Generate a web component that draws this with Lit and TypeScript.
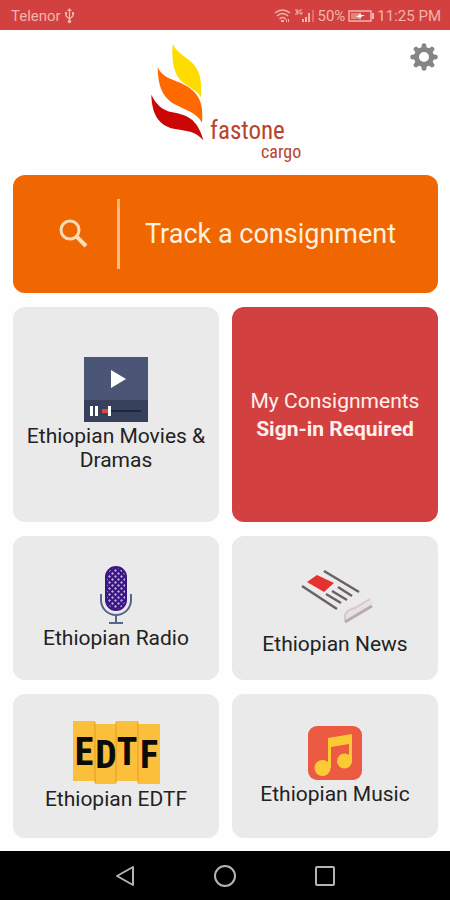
import { LitElement, html, css, svg } from "lit";
import { customElement, property } from "lit/decorators.js";

const gear = html`<svg width="28" height="28" viewBox="0 0 28 28" aria-hidden="true">
  <g fill="#858585">
    <path fill-rule="evenodd" d="M14 4a10 10 0 1 0 0 20a10 10 0 1 0 0-20zM14 9a5 5 0 1 1 0 10a5 5 0 1 1 0-10z"/>
    ${[0, 45, 90, 135, 180, 225, 270, 315].map(
      (a) => svg`<path transform="rotate(${a} 14 14)" d="M11 6L12 1Q14 -0.500 16 1L17 6z"/>`
    )}
  </g>
</svg>`;

const logo = html`<svg width="160" height="135" viewBox="0 0 160 135" role="img" aria-label="fastone cargo">
  <g transform="scale(.33333) translate(-15 0)">
    <path fill="#ffdc00" d="M98 27C112 57 140 65 160 87C183 112 185 145 183 187C168 160 142 158 120 134C98 109 95 68 98 27z"/>
    <path fill="#ff6a00" d="M53 97C72 135 105 132 141 154C181 179 191 212 186 263C168 232 137 226 104 208C61 184 54 141 53 97z"/>
    <path fill="#cc0505" d="M34 179C49 209 66 225 97 232C140 240 172 250 190 316C165 286 140 289 101 281C48 270 35 224 34 179z"/>
  </g>
  <text class="brand" x="65" y="104" font-size="25">fastone</text>
  <text class="brand" x="116" y="123" font-size="18">cargo</text>
</svg>`;

const movies = html`<svg width="64" height="65" viewBox="0 0 64 65" aria-hidden="true">
  <path fill="#4b5677" d="M0 0h64v65H0z"/>
  <path fill="#37415b" d="M0 43h64v22H0z"/>
  <path fill="#fff" d="M27 13L42 22L27 31z"/>
  <path fill="#fff" d="M6 49h3v10H6zM11 49h3v10h-3z"/>
  <path fill="#202838" d="M25 53h32v2H25z"/>
  <path fill="#e0463f" d="M18 52h6v4h-6z"/>
  <path fill="#fff" d="M24 49h3v10h-3z"/>
</svg>`;

const radio = html`<svg width="34" height="58" viewBox="0 0 34 58" aria-hidden="true">
  <defs>
    <pattern id="mesh" width="6" height="6" patternUnits="userSpaceOnUse">
      <path fill="#391586" d="M0 0h6v6H0z"/>
      <path fill="#b9a8da" d="M1.500 0L3 1.500L1.500 3L0 1.500zM4.500 3L6 4.500L4.500 6L3 4.500z"/>
    </pattern>
  </defs>
  <rect x="7" y="1" width="20" height="43" rx="10" fill="url(#mesh)" stroke="#391586" stroke-width="2"/>
  <path d="M2 28v6a15 15 0 0 0 30 0v-6M17 49v7M10 57h14" fill="none" stroke="#58658a" stroke-width="2"/>
</svg>`;

const news = html`<svg width="76" height="70" viewBox="0 0 76 70" aria-hidden="true">
  <path fill="#e5312f" d="M20 15L37 23L27 32L10 22z"/>
  <path d="M27 11L62 32M5 26L40 49M41 27L55 36M35 31L50 40M29 34L44 43" fill="none" stroke="#6a6268" stroke-width="2.600"/>
  <path fill="#e9e0e4" d="M47 62V55Q50 48 58 47L73 38L76 44L50 62z"/>
  <path d="M48 61V55Q51 49 58 48L73 39" fill="none" stroke="#d3c8ce" stroke-width="2"/>
  <path d="M48 62L75 46" fill="none" stroke="#b9abb4" stroke-width="3"/>
</svg>`;

const edtf = html`<svg width="88" height="64" viewBox="0 0 88 64" aria-hidden="true">
  <path fill="#fcbf3b" d="M1 0h22v60H1zM23 3h21v60H23zM44 0h22v60H44zM66 3h22v60H66z"/>
  <path d="M23 1v61M44 1v61M66 1v61" stroke="#e79a26" stroke-width="1"/>
  <g class="tiles" font-size="38">
    <text x="12" y="44">E</text><text x="34" y="47">D</text><text x="55" y="44">T</text><text x="77" y="47">F</text>
  </g>
</svg>`;

const music = html`<svg width="54" height="54" viewBox="0 0 54 54" aria-hidden="true">
  <rect width="54" height="54" rx="9" fill="#ec5a41"/>
  <path fill="#fbcb35" d="M20 12L44 8V35H41V18L23 21V42H20z"/>
  <circle cx="14.500" cy="42" r="8" fill="#fbcb35"/>
  <circle cx="36.500" cy="35" r="7.500" fill="#fbcb35"/>
</svg>`;

@customElement("status-bar")
class StatusBar extends LitElement {
  static styles = css`
    :host { display: flex; justify-content: space-between; align-items: center; height: 30px; padding: 2px 9px 0 11px; box-sizing: border-box; background: #d34040; color: #f3b3ad; font-size: 15px; }
    .side { display: flex; align-items: center; gap: 3px; }
  `;
  render() {
    return html`
      <span class="side">Telenor
        <svg width="11" height="16" viewBox="0 0 11 16" aria-hidden="true">
          <path d="M5.500 2v11M2 6v2l3.500 3L9 8V6" fill="none" stroke="currentColor" stroke-width="1.300"/>
          <path fill="currentColor" d="M5.500 0L8 3H3zM1 4h2v3H1zM8 4h2v3H8z"/><circle cx="5.500" cy="13.500" r="1.800" fill="currentColor"/>
        </svg>
      </span>
      <span class="side">
        <svg width="41" height="16" viewBox="0 0 41 16" aria-hidden="true">
          <path d="M1 5Q8.500 -1 16 5M3 8Q8.500 3 14 8M5.500 11Q8.500 8 11.500 11" fill="none" stroke="currentColor" stroke-width="1.600"/>
          <path fill="currentColor" d="M7 12h3v2H7zM12 11h1v3h-1zM14 11h1v3h-1z"/>
          <path d="M21 2h3v2h-2h2v2h-3M28 2h-2v4h2V4" fill="none" stroke="currentColor"/>
          <path fill="currentColor" d="M28 11h2v3h-2zM31 9h2v5h-2zM34 5h2v9h-2z"/>
          <path fill="currentColor" opacity=".4" d="M38 2h2v12h-2z"/>
        </svg>
        <span>50%</span>
        <svg width="26" height="12" viewBox="0 0 26 12" aria-hidden="true">
          <rect x="1" y="1" width="22" height="10" fill="none" stroke="currentColor" stroke-width="1.500"/>
          <path fill="currentColor" opacity=".6" d="M3 3h8v6H3z"/>
          <path fill="currentColor" d="M24 3h2v6h-2z"/>
          <path fill="#fff" d="M12 2l1 3h4l-4 2-1 3-1-3H8l3-2z"/>
        </svg>
        <span>11:25 PM</span>
      </span>`;
  }
}

@customElement("menu-card")
class MenuCard extends LitElement {
  @property({ attribute: false }) icon: unknown;
  @property() label = "";
  static styles = css`
    :host { display: grid; }
    .card { display: flex; flex-direction: column; align-items: center; justify-content: center; gap: 2px; padding: 0 8px; border: 0; border-radius: 12px; background: #eaeaea; color: #222; font: 21px/24px Roboto, sans-serif; text-align: center; cursor: pointer; }
    .tiles { font-family: "Liberation Sans Narrow", "Roboto Condensed", "Liberation Sans", sans-serif; font-weight: 700; text-anchor: middle; fill: #0b0b0b; }
    svg { display: block; }
  `;
  render() {
    return html`<button class="card" type="button">${this.icon}<span>${this.label}</span></button>`;
  }
}

@customElement("app-root")
class AppRoot extends LitElement {
  static styles = css`
    :host { display: flex; flex-direction: column; min-height: 100vh; background: #fefefe; font-family: Roboto, sans-serif; }
    button { border: 0; font-family: inherit; cursor: pointer; }
    svg { display: block; }
    .top { display: grid; grid-template-columns: 1fr auto 1fr; padding: 5px 12px; }
    .logo { grid-column: 2; }
    .brand { font-family: "Liberation Sans Narrow", "Roboto Condensed", "Liberation Sans", sans-serif; fill: #b8442c; }
    .settings { justify-self: end; align-self: start; margin-top: 8px; padding: 0; background: none; }
    main { flex: 1; display: flex; flex-direction: column; gap: 14px; padding: 0 12px 13px 13px; }
    .track { display: flex; align-items: center; height: 118px; padding: 0 40px 0 43px; border-radius: 12px; background: #f06600; color: #fff1dd; font-size: 27px; white-space: nowrap; }
    .rule { width: 3px; height: 70px; margin: 0 25px 0 27px; background: #fbb984; }
    .grid { display: grid; grid-template-columns: 1fr 1fr; grid-template-rows: minmax(215px, auto) minmax(144px, auto) minmax(144px, auto); gap: 14px 13px; }
    .mine { display: flex; flex-direction: column; align-items: center; justify-content: center; padding: 0 8px; border-radius: 12px; background: #d34040; color: #fff0ed; font-size: 21px; line-height: 28px; }
    nav { display: flex; justify-content: center; align-items: center; gap: 72px; height: 49px; background: #000; }
    .key { padding: 0; background: none; }
  `;
  render() {
    return html`
      <status-bar></status-bar>
      <header class="top">
        <div class="logo">${logo}</div>
        <button class="settings" type="button" aria-label="Settings">${gear}</button>
      </header>
      <main>
        <button class="track" type="button">
          <svg width="34" height="34" viewBox="0 0 34 34" aria-hidden="true">
            <circle cx="14" cy="13" r="9" fill="none" stroke="#fddcb8" stroke-width="3"/>
            <path d="M20 19L30 29" stroke="#fddcb8" stroke-width="4"/>
          </svg>
          <span class="rule"></span>
          <span>Track a consignment</span>
        </button>
        <div class="grid">
          <menu-card .icon=${movies} label="Ethiopian Movies &amp; Dramas"></menu-card>
          <button class="mine" type="button"><span>My Consignments</span><strong>Sign-in Required</strong></button>
          <menu-card .icon=${radio} label="Ethiopian Radio"></menu-card>
          <menu-card .icon=${news} label="Ethiopian News"></menu-card>
          <menu-card .icon=${edtf} label="Ethiopian EDTF"></menu-card>
          <menu-card .icon=${music} label="Ethiopian Music"></menu-card>
        </div>
      </main>
      <nav aria-label="System">
        <button class="key" type="button" aria-label="Back"><svg width="28" height="24" viewBox="0 0 28 24" fill="none" stroke="#b4b4b4" stroke-width="2" stroke-linejoin="round"><path d="M6 12L22 3V21z"/></svg></button>
        <button class="key" type="button" aria-label="Home"><svg width="28" height="24" viewBox="0 0 28 24" fill="none" stroke="#b4b4b4" stroke-width="2"><circle cx="14" cy="12" r="10"/></svg></button>
        <button class="key" type="button" aria-label="Recent apps"><svg width="28" height="24" viewBox="0 0 28 24" fill="none" stroke="#b4b4b4" stroke-width="2"><rect x="5" y="3" width="18" height="18" rx="1"/></svg></button>
      </nav>`;
  }
}
